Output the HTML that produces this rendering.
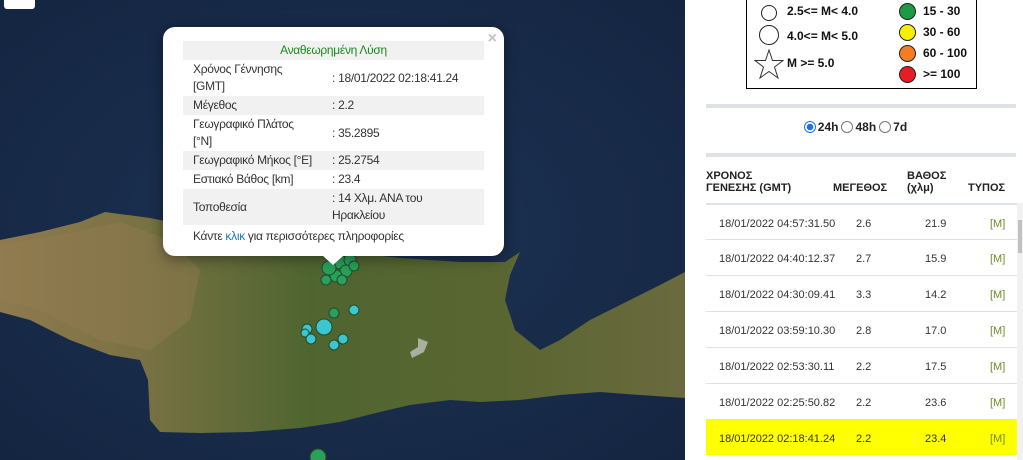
<!DOCTYPE html>
<html><head><meta charset="utf-8"><style>
*{margin:0;padding:0;box-sizing:border-box}
body{width:1023px;height:460px;overflow:hidden;background:#fff;font-family:"Liberation Sans","DejaVu Sans",sans-serif;position:relative}
#map{position:absolute;left:0;top:0;width:685px;height:460px;overflow:hidden}
.pop{position:absolute;left:163px;top:27px;width:341px;height:229px;background:#fff;border-radius:12px;box-shadow:0 3px 14px rgba(0,0,0,.4)}
.pop table{position:absolute;left:20px;top:14px;width:301px;border-collapse:collapse;font-size:12px;color:#333;letter-spacing:-0.3px;table-layout:fixed}
.pop td{padding:1px 10px;line-height:17px;vertical-align:middle;white-space:nowrap}
.pop tr.g td{background:#f1f1f1}
.pop td.v{padding-left:3px}
.x{position:absolute;right:7px;top:3px;color:#c3c3c3;font:bold 16px "Liberation Sans",sans-serif}
.tip{position:absolute;left:322px;top:255px;width:0;height:0;border-left:11px solid transparent;border-right:11px solid transparent;border-top:10px solid #fff}
#panel{position:absolute;left:685px;top:0;width:338px;height:460px}
.leg{position:absolute;left:61px;top:-2px;width:231px;height:91px;border:1.5px solid #000;font-size:12px;font-weight:bold;color:#111}
.leg span{position:absolute;white-space:nowrap}
.c{position:absolute;border-radius:50%;border:1px solid #222}
.sep{position:absolute;left:21px;width:310px;height:4px;background:#dee2e6}
.rad{position:absolute;top:120px;left:0;width:338px;text-align:center;font-size:12px;font-weight:bold;color:#222}
.rb{display:inline-block;width:12px;height:12px;border-radius:50%;border:1px solid #777;vertical-align:-2px;margin:0 2px 0 3px;background:#fff}
.rb.on{border:1px solid #1a73e8;background:radial-gradient(circle,#1a73e8 3px,#fff 3.5px)}
.hd{position:absolute;font-size:11px;font-weight:bold;color:#222;line-height:12px}
.row{position:absolute;left:21px;width:311px;height:36px;border-top:1px solid #dee2e6;font-size:11px;color:#333}
.row span{position:absolute;top:13px}
.m{color:#6b8e23}
</style></head><body>
<div id="map">
<svg width="685" height="460" viewBox="0 0 685 460">
<defs>
<radialGradient id="sea" cx="50%" cy="50%" r="70%"><stop offset="0" stop-color="#1d3354"/><stop offset="1" stop-color="#142541"/></radialGradient>
<linearGradient id="land" x1="0" y1="0" x2="1" y2="0"><stop offset="0" stop-color="#8e7a4e"/><stop offset=".2" stop-color="#7a7244"/><stop offset=".45" stop-color="#4f6530"/><stop offset=".75" stop-color="#5b6632"/><stop offset="1" stop-color="#6a6a3e"/></linearGradient>
</defs>
<rect width="685" height="460" fill="url(#sea)"/>
<path d="M0 240 L40 232 L80 222 L105 212 L150 218 L200 228 L260 240 L330 250 L400 258 L460 262 L505 262 L520 252 L510 275 L505 300 L515 330 L540 350 L560 340 L590 320 L630 300 L660 285 L685 272 L685 398 L640 395 L600 392 L560 395 L520 400 L480 402 L450 400 L410 405 L380 412 L340 422 L300 428 L250 432 L200 433 L160 432 L150 420 L148 380 L140 360 L110 355 L70 340 L30 320 L0 312 Z" fill="url(#land)"/>
<path d="M0 245 L60 235 L120 222 L170 240 L200 270 L190 320 L150 350 L100 340 L40 310 L0 300Z" fill="#957d52" opacity=".4"/>
<path d="M418 338 L428 342 L424 352 L412 358 L410 352 L418 347Z" fill="#cfcfcf" opacity=".7"/>
<g stroke="#1f4d2c" stroke-width="1">
<circle cx="340" cy="262" r="7" fill="#2aa05a"/><circle cx="350" cy="260" r="6" fill="#2aa05a"/><circle cx="346" cy="271" r="6" fill="#2aa05a"/><circle cx="336" cy="276" r="6" fill="#2aa05a"/><circle cx="326" cy="280" r="5" fill="#2aa05a"/><circle cx="329" cy="268" r="7" fill="#2aa05a"/><circle cx="342" cy="280" r="5" fill="#2aa05a"/><circle cx="354" cy="266" r="5" fill="#2aa05a"/>
<circle cx="334" cy="313" r="5" fill="#2aa05a"/><circle cx="318" cy="457" r="8" fill="#2aa05a"/>
<g fill="#3cc6d0"><circle cx="354" cy="310" r="5"/><circle cx="324" cy="327" r="8"/><circle cx="307" cy="329" r="5"/><circle cx="305" cy="333" r="4"/><circle cx="311" cy="339" r="5"/><circle cx="334" cy="345" r="5"/><circle cx="343" cy="339" r="5"/></g>
</g>
<rect x="4" y="-4" width="31" height="13" rx="3" fill="#fff"/>
</svg>
<div class="pop"><span class="x">×</span>
<table>
<colgroup><col style="width:146px"><col></colgroup>
<tr class="g"><td colspan="2" style="text-align:center;color:#1a8a1a">Αναθεωρημένη Λύση</td></tr>
<tr><td>Χρόνος Γέννησης<br>[GMT]</td><td class="v">: 18/01/2022 02:18:41.24</td></tr>
<tr class="g"><td>Μέγεθος</td><td class="v">: 2.2</td></tr>
<tr><td>Γεωγραφικό Πλάτος<br>[°N]</td><td class="v">: 35.2895</td></tr>
<tr class="g"><td>Γεωγραφικό Μήκος [°E]</td><td class="v">: 25.2754</td></tr>
<tr><td>Εστιακό Βάθος [km]</td><td class="v">: 23.4</td></tr>
<tr class="g"><td>Τοποθεσία</td><td class="v">: 14 Χλμ. ΑΝΑ του<br>Ηρακλείου</td></tr>
<tr><td colspan="2" style="padding-top:3px">Κάντε <span style="color:#1a7ab8">κλικ</span> για περισσότερες πληροφορίες</td></tr>
</table></div>
<div class="tip"></div>
</div>
<div id="panel">
<div class="leg">
<div class="c" style="left:14px;top:6px;width:16px;height:16px"></div><span style="left:40px;top:5px">2.5&lt;= M&lt; 4.0</span>
<div class="c" style="left:12px;top:26px;width:20px;height:20px"></div><span style="left:40px;top:30px">4.0&lt;= M&lt; 5.0</span>
<svg style="position:absolute;left:7px;top:50px" width="30" height="32" viewBox="0 0 30 32"><path d="M15 1 L18.5 11.5 L29 11.5 L20.5 18 L24 29 L15 22.5 L6 29 L9.5 18 L1 11.5 L11.5 11.5Z" fill="#fff" stroke="#333"/></svg>
<span style="left:40px;top:57px">M &gt;= 5.0</span>
<div class="c" style="left:152px;top:4px;width:17px;height:17px;background:#1e9a44"></div><span style="left:176px;top:5px">15 - 30</span>
<div class="c" style="left:152px;top:25px;width:17px;height:17px;background:#f7ee00"></div><span style="left:176px;top:26px">30 - 60</span>
<div class="c" style="left:152px;top:46px;width:17px;height:17px;background:#f57c20"></div><span style="left:176px;top:47px">60 - 100</span>
<div class="c" style="left:152px;top:67px;width:17px;height:17px;background:#e81c24"></div><span style="left:176px;top:68px">&gt;= 100</span>
</div>
<div class="sep" style="top:104px"></div>
<div class="rad"><span class="rb on"></span>24h<span class="rb"></span>48h<span class="rb"></span>7d</div>
<div class="sep" style="top:153px"></div>
<div class="hd" style="left:21px;top:170px">ΧΡΟΝΟΣ<br>ΓΕΝΕΣΗΣ (GMT)</div>
<div class="hd" style="left:148px;top:182px">ΜΕΓΕΘΟΣ</div>
<div class="hd" style="left:222px;top:170px">ΒΑΘΟΣ<br>(χλμ)</div>
<div class="hd" style="left:283px;top:182px">ΤΥΠΟΣ</div>
<div class="row" style="top:203px;border-top:2px solid #dee2e6"><span style="left:13px">18/01/2022 04:57:31.50</span><span style="left:150px">2.6</span><span style="left:219px">21.9</span><span class="m" style="left:284px">[M]</span></div>
<div class="row" style="top:239px"><span style="left:13px">18/01/2022 04:40:12.37</span><span style="left:150px">2.7</span><span style="left:219px">15.9</span><span class="m" style="left:284px">[M]</span></div>
<div class="row" style="top:275px"><span style="left:13px">18/01/2022 04:30:09.41</span><span style="left:150px">3.3</span><span style="left:219px">14.2</span><span class="m" style="left:284px">[M]</span></div>
<div class="row" style="top:311px"><span style="left:13px">18/01/2022 03:59:10.30</span><span style="left:150px">2.8</span><span style="left:219px">17.0</span><span class="m" style="left:284px">[M]</span></div>
<div class="row" style="top:347px"><span style="left:13px">18/01/2022 02:53:30.11</span><span style="left:150px">2.2</span><span style="left:219px">17.5</span><span class="m" style="left:284px">[M]</span></div>
<div class="row" style="top:383px"><span style="left:13px">18/01/2022 02:25:50.82</span><span style="left:150px">2.2</span><span style="left:219px">23.6</span><span class="m" style="left:284px">[M]</span></div>
<div class="row" style="top:419px;background:#ffff00"><span style="left:13px">18/01/2022 02:18:41.24</span><span style="left:150px">2.2</span><span style="left:219px">23.4</span><span class="m" style="left:284px">[M]</span></div>
<div style="position:absolute;left:332px;top:203px;width:6px;height:257px;background:#f1f1f1"></div>
<div style="position:absolute;left:333px;top:220px;width:4px;height:33px;background:#c1c1c1"></div>
</div>
</body></html>
